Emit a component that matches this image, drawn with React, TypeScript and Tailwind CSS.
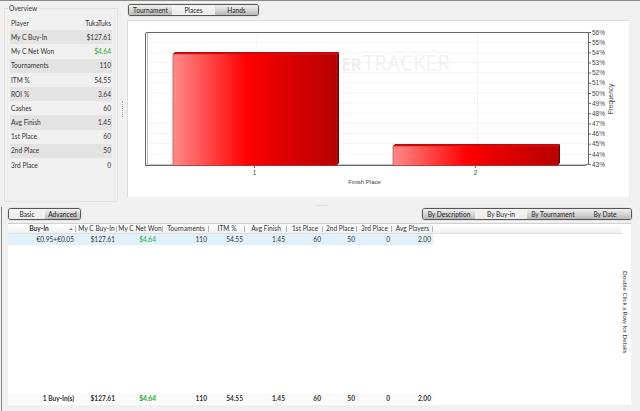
import React from 'react';

const font = 'font-["Lato",sans-serif]';

const overview: [string, string][] = [
  ['Player', 'TukaTuks'],
  ['My C Buy-In', '$127.61'],
  ['My C Net Won', '$4.64'],
  ['Tournaments', '110'],
  ['ITM %', '54.55'],
  ['ROI %', '3.64'],
  ['Cashes', '60'],
  ['Avg Finish', '1.45'],
  ['1st Place', '60'],
  ['2nd Place', '50'],
  ['3rd Place', '0'],
];

const columns: [string, number][] = [
  ['Buy-In', 68],
  ['My C Buy-In', 41],
  ['My C Net Won', 46],
  ['Tournaments', 46],
  ['ITM %', 36],
  ['Avg Finish', 42],
  ['1st Place', 36],
  ['2nd Place', 34],
  ['3rd Place', 35],
  ['Avg Players', 41],
];

const rowValues = ['€0.95+€0.05', '$127.61', '$4.64', '110', '54.55', '1.45', '60', '50', '0', '2.00'];
const totalValues = ['1 Buy-In(s)', '$127.61', '$4.64', '110', '54.55', '1.45', '60', '50', '0', '2.00'];

const Segmented = ({ items, active, widths }: { items: string[]; active: string; widths: string[] }) => (
  <div className="flex h-[12px] rounded-[3px] border border-[#555] overflow-hidden shadow-[0_0_1px_#777]">
    {items.map((label, i) => (
      <div
        key={label}
        className={`${widths[i]} flex items-center justify-center text-[6.6px] leading-none text-[#222] ${
          label === active
            ? 'bg-gradient-to-b from-[#f4f4f4] to-[#ececec]'
            : 'bg-gradient-to-b from-[#f2f2f2] to-[#b9b9b9]'
        }`}
      >
        {label}
      </div>
    ))}
  </div>
);

const Chart = () => {
  const ticks = Array.from({ length: 14 }, (_, i) => i);
  return (
    <svg width="501" height="176" viewBox="128 21 501 176" className="block">
      <defs>
        <linearGradient id="barFace" x1="0" x2="1" y1="0" y2="0">
          <stop offset="0" stopColor="#ff8a8a" />
          <stop offset="0.45" stopColor="#ff0000" />
          <stop offset="0.62" stopColor="#e60000" />
          <stop offset="1" stopColor="#b80000" />
        </linearGradient>
      </defs>
      {ticks.map((i) => (
        <line key={i} x1="147" x2="587" y1={32 + i * 10.15} y2={32 + i * 10.15} stroke="#f3f3f3" />
      ))}
      <line x1="257" x2="257" y1="32" y2="164" stroke="#f3f3f3" />
      <line x1="477.5" x2="477.5" y1="32" y2="164" stroke="#f3f3f3" />
      <text x="341" y="71" fontSize="17" fontFamily="Open Sans, sans-serif" fill="#efefef" fontWeight="700">
        ER
      </text>
      <text x="363" y="71" fontSize="22" fontFamily="Open Sans, sans-serif" fill="#f1f1f1" textLength="87" lengthAdjust="spacingAndGlyphs">
        TRACKER
      </text>
      <path d="M145 166 L147 164 L587 164 L585 166 Z" fill="#c8c8c8" />
      <path d="M145.5 166 V33 L147 32.5 H588" fill="none" stroke="#666" />
      <line x1="145" x2="585" y1="165.5" y2="165.5" stroke="#666" />
      <path d="M585 165.5 L588 164" stroke="#666" fill="none" />
      <line x1="147.5" x2="147.5" y1="33" y2="164" stroke="#bbb" />

      <path d="M173 54 L175 52 H339 L337 54 Z" fill="#d40000" />
      <path d="M337 54 L339 52 V163 L337 165 Z" fill="#7d0000" />
      <rect x="173" y="54" width="164" height="111.5" fill="url(#barFace)" stroke="#b03030" strokeWidth="0.6" />
      <path d="M393 146 L395 144 H560 L558 146 Z" fill="#d40000" />
      <path d="M558 146 L560 144 V163 L558 165 Z" fill="#7d0000" />
      <rect x="393" y="146" width="165" height="19.5" fill="url(#barFace)" stroke="#b03030" strokeWidth="0.6" />

      <line x1="588.5" x2="588.5" y1="32" y2="164" stroke="#666" />
      {ticks.map((i) => (
        <g key={i}>
          <line x1="588" x2="591" y1={32.5 + i * 10.15} y2={32.5 + i * 10.15} stroke="#666" />
          <text x="592" y={34.7 + i * 10.15} fontSize="6.5" fontFamily="Liberation Sans, sans-serif" fill="#444">
            {56 - i}%
          </text>
        </g>
      ))}
      <line x1="254.5" x2="254.5" y1="165" y2="168" stroke="#666" />
      <line x1="475.5" x2="475.5" y1="165" y2="168" stroke="#666" />
      <text x="254.5" y="175" fontSize="6.5" textAnchor="middle" fontFamily="Liberation Sans, sans-serif" fill="#444">1</text>
      <text x="475.5" y="175" fontSize="6.5" textAnchor="middle" fontFamily="Liberation Sans, sans-serif" fill="#444">2</text>
      <text x="364.5" y="184" fontSize="6" textAnchor="middle" fontFamily="Liberation Sans, sans-serif" fill="#444">Finish Place</text>
      <text transform="translate(613 99) rotate(-90)" fontSize="6.5" textAnchor="middle" fontFamily="Liberation Sans, sans-serif" fill="#444">Frequency</text>
    </svg>
  );
};

const Row = ({ values, bold, className }: { values: string[]; bold?: boolean; className: string }) => (
  <div className={`flex items-center ${className}`}>
    {values.map((v, i) => (
      <div
        key={i}
        style={{ width: columns[i][1] }}
        className={`text-right pr-[2px] text-[6.6px] leading-none whitespace-nowrap ${bold ? 'font-bold' : ''} ${
          i === 2 ? 'text-[#1fa82f] pr-[7px]' : 'text-[#333]'
        }`}
      >
        {v}
      </div>
    ))}
  </div>
);

export default function App() {
  return (
    <div className={`w-[640px] h-[411px] overflow-hidden bg-[#f0f0f0] border-t border-[#8a8a8a] flex flex-col ${font}`}>
      <div className="flex h-[200px] pt-[3px] pl-[4px]">
        <div className="relative w-[114px] h-[194px] mt-[4px] border border-[#e2e2e2] rounded-[1px] px-[5px] pt-[7px]">
          <div className="absolute -top-[4px] left-[3px] px-[1px] bg-[#f0f0f0] text-[6.6px] leading-none text-[#333]">Overview</div>
          {overview.map(([label, value], i) => (
            <div
              key={label}
              className={`flex items-center justify-between h-[14.2px] px-[1px] text-[6.6px] leading-none text-[#333] ${
                i % 2 === 1 ? 'bg-[#e3e3e3]' : ''
              }`}
            >
              <span>{label}</span>
              <span className={label === 'My C Net Won' ? 'text-[#1fa82f]' : ''}>{value}</span>
            </div>
          ))}
        </div>
        <div className="w-[9px] flex flex-col items-center justify-center">
          <div className="w-[2px] h-[16px] border-l border-dotted border-[#aaa] mt-[12px]" />
        </div>
        <div className="flex flex-col">
          <div className="flex h-[16px] pl-[1px]">
            <Segmented items={['Tournament', 'Places', 'Hands']} active="Places" widths={['w-[43px]', 'w-[43px]', 'w-[43px]']} />
          </div>
          <div className="bg-white border-t border-l border-[#dcdcdc]">
            <Chart />
          </div>
        </div>
      </div>
      <div className="h-[6px] flex items-center justify-center text-[6px] leading-none text-[#aaa] tracking-[1px] pl-[5px]">.....</div>
      <div className="flex-1 border-l border-[#888] ml-[1px] pl-[6px] pt-[1px] flex flex-col">
        <div className="flex justify-between h-[15px] w-[624px]">
          <Segmented items={['Basic', 'Advanced']} active="Basic" widths={['w-[36px]', 'w-[35px]']} />
          <Segmented items={['By Description', 'By Buy-in', 'By Tournament', 'By Date']} active="By Buy-in" widths={['w-[52px]', 'w-[52px]', 'w-[52px]', 'w-[52px]']} />
        </div>
        <div className="relative w-[623px] h-[182px] bg-white flex flex-col border-t border-[#cfcfcf]">
          <div className="flex h-[10px] w-[614px] bg-gradient-to-b from-[#ffffff] to-[#f1f1f1] border-b border-[#dedede]">
            {columns.map(([label, w], i) => (
              <div
                key={label}
                style={{ width: w }}
                className={`relative flex items-center justify-center text-[6.6px] leading-none whitespace-nowrap text-[#333] ${i === 0 ? 'font-bold pr-[6px]' : ''}`}
              >
                {label}
                <span className="absolute right-0 top-[2px] h-[6px] border-r border-[#b5b5b5]" />
                {i === 0 && <span className="absolute right-[3px] top-[4px] w-0 h-0 border-x-[2px] border-b-[2px] border-x-transparent border-b-[#777]" />}
              </div>
            ))}
          </div>
          <Row values={rowValues} className="h-[11px] w-[425px] bg-[#e0f1fb]" />
          <div className="flex-1" />
          <Row values={totalValues} bold className="h-[11px] w-[425px] bg-[#fbfbfb] mb-[1px]" />
          <div className="absolute top-[47px] right-[3px] [writing-mode:vertical-rl] text-[6.2px] leading-none text-[#333] whitespace-nowrap">
            Double Click a Row for Details
          </div>
        </div>
      </div>
    </div>
  );
}
